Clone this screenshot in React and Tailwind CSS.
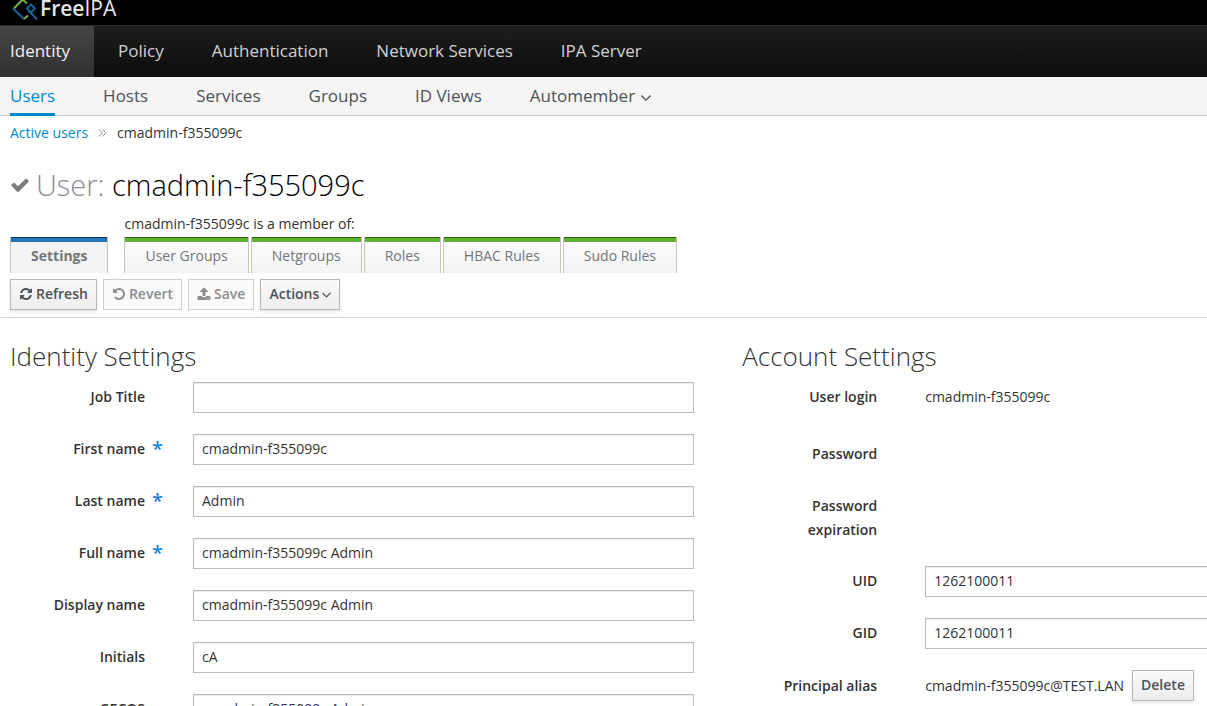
const ICONS = {
  check:
    'M1671 566q0 40-28 68l-724 724-136 136q-28 28-68 28t-68-28l-136-136-362-362q-28-28-28-68t28-68l136-136q28-28 68-28t68 28l294 295 656-657q28-28 68-28t68 28l136 136q28 28 28 68z',
  refresh:
    'M1639 1056q0 5-1 7-64 268-268 434.5t-478 166.5q-146 0-282.5-55t-243.5-157l-129 129q-19 19-45 19t-45-19-19-45v-448q0-26 19-45t45-19h448q26 0 45 19t19 45-19 45l-137 137q71 66 161 102t187 36q134 0 250-65t186-179q11-17 53-117 8-23 30-23h192q13 0 22.5 9.5t9.5 22.5zm25-800v448q0 26-19 45t-45 19h-448q-26 0-45-19t-19-45 19-45l138-138q-148-137-349-137-134 0-250 65t-186 179q-11 17-53 117-8 23-30 23h-199q-13 0-22.5-9.5t-9.5-22.5v-7q65-268 270-434.5t480-166.5q146 0 284 55.5t245 156.5l130-129q19-19 45-19t45 19 19 45z',
  undo:
    'M1664 896q0 156-61 298t-164 245-245 164-298 61q-172 0-327-72.5t-264-204.5q-7-10-6.5-22.5t8.5-20.5l137-138q10-9 25-9 16 2 23 12 73 95 179 147t225 52q104 0 198.5-40.5t163.5-109.5 109.5-163.5 40.5-198.5-40.5-198.5-109.5-163.5-163.5-109.5-198.5-40.5q-98 0-188 35.5t-160 101.5l137 138q31 30 14 69-17 40-59 40h-448q-26 0-45-19t-19-45v-448q0-42 40-59 39-17 69 14l130 129q107-101 244.5-156.5t284.5-55.5q156 0 298 61t245 164 164 245 61 298z',
  upload:
    'M1344 1472q0-26-19-45t-45-19-45 19-19 45 19 45 45 19 45-19 19-45zm256 0q0-26-19-45t-45-19-45 19-19 45 19 45 45 19 45-19 19-45zm128-224v320q0 40-28 68t-68 28h-1472q-40 0-68-28t-28-68v-320q0-40 28-68t68-28h427q21 56 70.5 92t110.5 36h256q61 0 110.5-36t70.5-92h427q40 0 68 28t28 68zm-325-648q-17 40-59 40h-256v448q0 26-19 45t-45 19h-256q-26 0-45-19t-19-45v-448h-256q-42 0-59-40-17-39 14-69l448-448q18-19 45-19t45 19l448 448q31 30 14 69z',
};

function Icon({ name, className }) {
  return (
    <svg viewBox="0 0 1792 1792" fill="currentColor" aria-hidden="true" className={className}>
      <path d={ICONS[name]} />
    </svg>
  );
}

function Chevron({ className }) {
  return (
    <svg viewBox="396 640 1000 600" fill="currentColor" aria-hidden="true" className={className}>
      <path d="M1395 736q0 13-10 23l-466 466q-10 10-23 10t-23-10l-466-466q-10-10-10-23t10-23l50-50q10-10 23-10t23 10l393 393 393-393q10-10 23-10t23 10l50 50q10 10 10 23z" />
    </svg>
  );
}

function Brand() {
  return (
    <header className="flex h-[25px] items-end overflow-hidden bg-black pl-3">
      <a href="#home" className="flex items-end gap-[2px] text-[#e6e6e6]">
        <svg viewBox="0 0 26 20" fill="none" className="mb-[5px] h-5 w-[26px]" strokeWidth="2">
          <path d="M1.500 9 L10.500 -0.500 L15 3.500" stroke="#72b03c" />
          <path d="M1 8.500 L12 19" stroke="#0f6499" />
          <path d="M12 19 L16 15.500" stroke="#72b03c" />
          <path d="M19 4.500 L23 8.500 L19 12.500 L15 8.500 Z" stroke="#0f6499" />
          <path d="M16.500 10.500 L25 19.500" stroke="#0f6499" />
        </svg>
        <span className="text-[21px] leading-[34px] font-semibold">
          Free<span className="font-normal">IPA</span>
        </span>
      </a>
    </header>
  );
}

function MainNav() {
  const items = ['Policy', 'Authentication', 'Network Services', 'IPA Server'];
  return (
    <nav className="flex h-[52px] border-t border-[#2e2e2e] bg-linear-to-b from-[#1d1d1d] to-[#0d0d0d] text-[17px] text-[#d1d1d1]">
      <a href="#identity" className="flex items-center bg-linear-to-b from-[#464646] to-[#303030] pr-6 pb-[2px] pl-[10px] text-[#f1f1f1]">
        Identity
      </a>
      {items.map((t) => (
        <a key={t} href="#nav" className="flex items-center px-6 pb-[2px]">
          {t}
        </a>
      ))}
    </nav>
  );
}

function SubNav() {
  return (
    <nav className="flex h-[39px] gap-12 border-b border-[#d1d1d1] bg-[#f5f5f5] px-[10px] text-[17px] leading-[38px] text-[#4d5258]">
      <a href="#users" className="h-[39px] border-b-3 border-[#0088ce] text-[#0088ce]">
        Users
      </a>
      {['Hosts', 'Services', 'Groups', 'ID Views'].map((t) => (
        <a key={t} href="#sub">
          {t}
        </a>
      ))}
      <a href="#automember" className="flex items-center gap-[6px]">
        Automember
        <Chevron className="mt-1 h-[6px] w-[10px]" />
      </a>
    </nav>
  );
}

function Tab({ label, active }) {
  return (
    <a
      href="#tab"
      className={
        active
          ? 'flex flex-col border-x border-[#c8c2b8] bg-[#f3f3f3] font-bold text-[#72767b]'
          : 'flex flex-col border-x border-[#c8c2b8] bg-linear-to-b from-[#fcfcfc] to-[#f3f3f3] text-[#72767b]'
      }
    >
      <span
        className={
          active
            ? 'h-[5px] border-t border-[#16324a] bg-[#1f78bd]'
            : 'h-[5px] border-t border-[#2c6114] bg-[#62b132]'
        }
      />
      <span className="px-5 pb-[3px] leading-7">{label}</span>
    </a>
  );
}

const BUTTON =
  'flex h-[31px] items-center gap-[3px] border border-[#b7b7b7] bg-linear-to-b from-[#fafafa] to-[#ededed] px-2 pb-[2px] font-semibold text-[#4d5258] shadow-[0_2px_3px_rgba(3,3,3,0.1)] disabled:border-[#d1d1d1] disabled:bg-[#fafafa] disabled:bg-none disabled:text-[#8b8d8f] disabled:shadow-none';

function Toolbar() {
  return (
    <div className="mt-[6px] flex gap-[6px] border-b border-[#d9d9d9] px-[10px] pb-[7px]">
      <button type="button" className={BUTTON}>
        <Icon name="refresh" className="size-[14px]" />
        Refresh
      </button>
      <button type="button" disabled className={BUTTON}>
        <Icon name="undo" className="size-[14px]" />
        Revert
      </button>
      <button type="button" disabled className={BUTTON}>
        <Icon name="upload" className="size-[14px]" />
        Save
      </button>
      <button type="button" className={BUTTON}>
        Actions
        <Chevron className="mt-[2px] h-[6px] w-[9px]" />
      </button>
    </div>
  );
}

const LABEL = 'w-[135px] shrink-0 text-right font-semibold leading-6 text-[#333]';

function Field({ id, label, value, required }) {
  return (
    <div className="flex h-[31px]">
      <label htmlFor={id} className={LABEL + ' pt-[3px]'}>
        {label}
      </label>
      <span aria-hidden="true" className="w-12 shrink-0 pl-[7px] text-[20px] leading-[30px] font-semibold text-[#1f83d6]">
        {required ? '*' : ''}
      </span>
      <input
        id={id}
        type="text"
        required={required}
        defaultValue={value}
        className="min-w-0 flex-1 border border-[#bbb] bg-white px-2 pb-[2px] text-[#333] shadow-[inset_0_1px_1px_rgba(3,3,3,0.075)]"
      />
    </div>
  );
}

function Static({ label, className, children }) {
  return (
    <div className={className}>
      <div className={LABEL}>{label}</div>
      <div className="flex items-center gap-2 self-start pl-12 leading-6">{children}</div>
    </div>
  );
}

export default function App() {
  return (
    <div className="overflow-x-hidden bg-white font-['Open_Sans',sans-serif] text-[14px] text-[#333]">
      <Brand />
      <MainNav />
      <SubNav />
      <main>
        <div className="px-[10px]">
          <ol className="flex items-center pt-[5px] leading-6">
            <li>
              <a href="#active" className="text-[#0088ce]">
                Active users
              </a>
            </li>
            <li aria-hidden="true" className="px-[10px] text-[#8b8d8f]">
              <svg viewBox="0 0 9 10" fill="none" stroke="currentColor" className="h-[10px] w-[9px]">
                <path d="M1 1.500 L4.500 5 L1 8.500 M4.500 1.500 L8 5 L4.500 8.500" />
              </svg>
            </li>
            <li>cmadmin-f355099c</li>
          </ol>
          <h1 className="mt-5 flex items-center gap-[6px] text-[29px] leading-[40px] font-light text-black">
            <Icon name="check" className="size-5 text-[#7d7d7d]" />
            <span>
              <span className="text-[#8b8d8f]">User:</span> cmadmin-f355099c
            </span>
          </h1>
          <div className="mt-[6px] flex items-end gap-4">
            <Tab label="Settings" active />
            <div>
              <p className="leading-[26px]">cmadmin-f355099c is a member of:</p>
              <div className="flex gap-[2px]">
                {['User Groups', 'Netgroups', 'Roles', 'HBAC Rules', 'Sudo Rules'].map((t) => (
                  <Tab key={t} label={t} />
                ))}
              </div>
            </div>
          </div>
        </div>
        <Toolbar />
        <form className="grid grid-cols-[60%_60%] gap-5 px-[10px] pt-[19px]">
          <section className="pr-7">
            <h2 className="text-[26px] leading-[38px] font-light">Identity Settings</h2>
            <div className="mt-[7px] flex flex-col gap-[21px]">
              <Field id="title" label="Job Title" value="" />
              <Field id="first" label="First name" value="cmadmin-f355099c" required />
              <Field id="last" label="Last name" value="Admin" required />
              <Field id="full" label="Full name" value="cmadmin-f355099c Admin" required />
              <Field id="display" label="Display name" value="cmadmin-f355099c Admin" />
              <Field id="initials" label="Initials" value="cA" />
              <Field id="gecos" label="GECOS" value="cmadmin-f355099c Admin" />
            </div>
          </section>
          <section className="pr-7">
            <h2 className="text-[26px] leading-[38px] font-light">Account Settings</h2>
            <div className="mt-[10px] flex flex-col">
              <Static label="User login" className="flex h-[57px]">
                cmadmin-f355099c
              </Static>
              <Static label="Password" className="flex h-[52px]" />
              <Static label="Password expiration" className="flex h-[72px]" />
              <div className="flex flex-col gap-[21px]">
                <Field id="uid" label="UID" value="1262100011" />
                <Field id="gid" label="GID" value="1262100011" />
                <Static label="Principal alias" className="flex h-[31px] items-center">
                  cmadmin-f355099c@TEST.LAN
                  <button type="button" className={BUTTON}>
                    Delete
                  </button>
                </Static>
              </div>
            </div>
          </section>
        </form>
      </main>
    </div>
  );
}
